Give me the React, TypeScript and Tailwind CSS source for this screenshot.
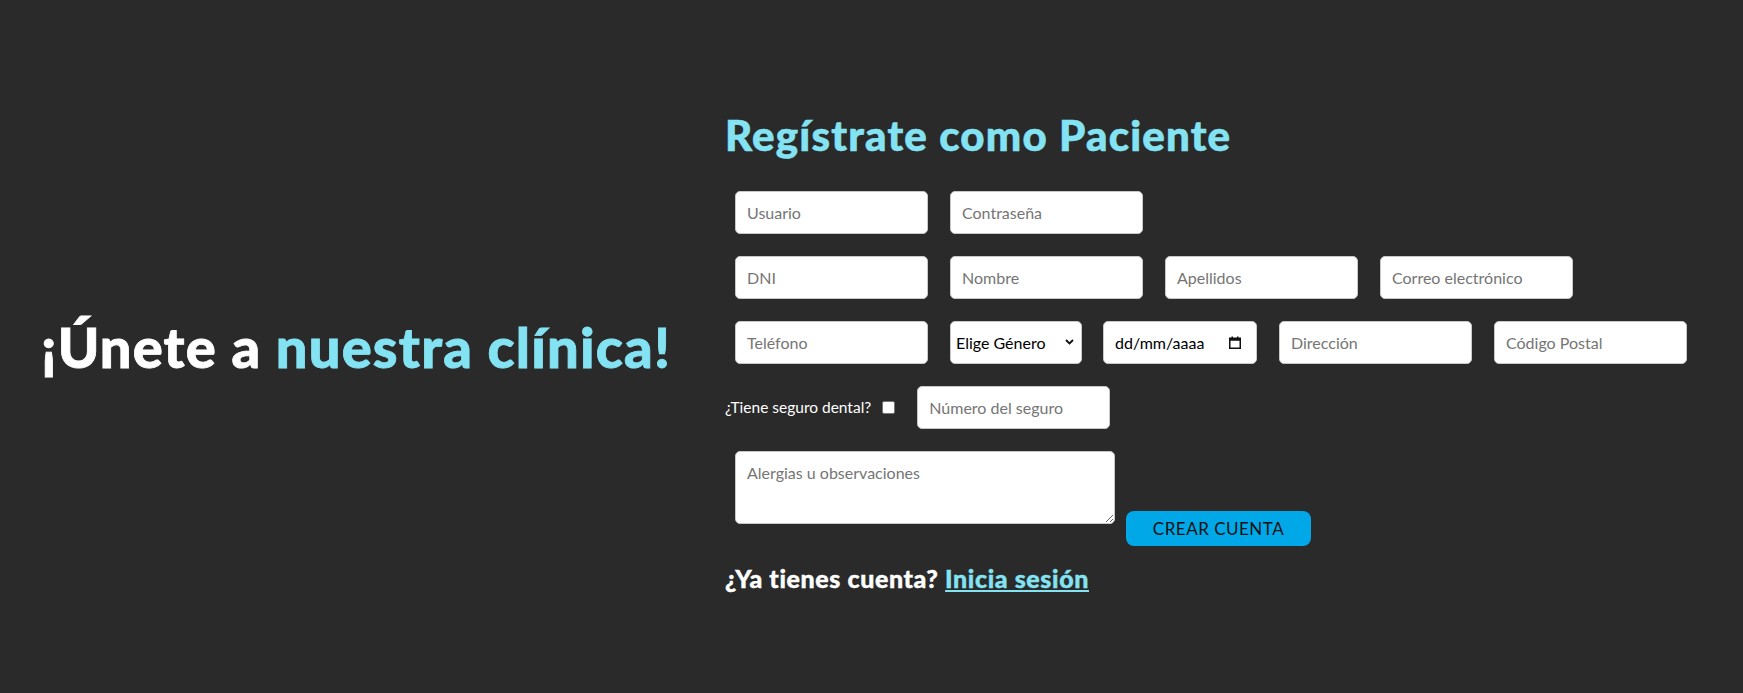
import React from "react";

const inputCls =
  "h-[43px] w-[193px] rounded-[5px] border border-[#c8c8c8] bg-white px-[11px] text-[16px] font-normal text-black placeholder:text-[#757575] outline-none";

function Field({ placeholder, type = "text" }: { placeholder: string; type?: string }) {
  return <input type={type} placeholder={placeholder} className={inputCls} />;
}

export default function App() {
  return (
    <div className="flex h-[693px] w-full overflow-hidden bg-[#2a2a2a] font-['Lato',sans-serif]">
      <div className="flex w-[725px] shrink-0 items-center pl-[41px]">
        <h1 className="whitespace-nowrap text-[56px] font-black leading-[1.2] tracking-[1.2px] text-white [-webkit-text-stroke:0.8px_currentColor]">
          ¡Únete a <span className="text-[#84e3f3]">nuestra clínica!</span>
        </h1>
      </div>
      <div className="flex flex-col pt-[110px]">
        <h2 className="whitespace-nowrap text-[42px] font-black leading-[1.2] tracking-[1.2px] text-[#84e3f3] [-webkit-text-stroke:0.6px_currentColor]">
          Regístrate como Paciente
        </h2>
        <form className="mt-[31px] flex flex-col gap-[22px]" onSubmit={(e) => e.preventDefault()}>
          <div className="flex gap-[22px] pl-[10px]">
            <Field placeholder="Usuario" />
            <Field placeholder="Contraseña" type="password" />
          </div>
          <div className="flex gap-[22px] pl-[10px]">
            <Field placeholder="DNI" />
            <Field placeholder="Nombre" />
            <Field placeholder="Apellidos" />
            <Field placeholder="Correo electrónico" />
          </div>
          <div className="flex gap-[22px] pl-[10px]">
            <Field placeholder="Teléfono" />
            <div className="relative h-[43px] w-[132px] -mr-[1px]">
              <select
                defaultValue=""
                className="h-full w-full appearance-none rounded-[5px] border border-[#c8c8c8] bg-white pl-[5px] pr-[20px] text-[16px] font-normal text-black outline-none"
              >
                <option value="">Elige Género</option>
                <option value="m">Masculino</option>
                <option value="f">Femenino</option>
              </select>
              <svg
                className="pointer-events-none absolute right-[8px] top-[18px]"
                width="9"
                height="6"
                viewBox="0 0 9 6"
              >
                <path d="M1 1l3.5 3.5L8 1" fill="none" stroke="#111" strokeWidth="1.8" />
              </svg>
            </div>
            <div className="flex h-[43px] w-[154px] items-center justify-between rounded-[5px] border border-[#c8c8c8] bg-white pl-[11px] pr-[15px] text-[16px] text-black">
              <span>dd/mm/aaaa</span>
              <svg width="12" height="13" viewBox="0 0 12 13">
                <rect x="0.75" y="2.25" width="10.5" height="10" fill="none" stroke="#111" strokeWidth="1.5" />
                <rect x="0.75" y="2.25" width="10.5" height="2.5" fill="#111" />
                <rect x="2.5" y="0.5" width="1.5" height="2.5" fill="#111" />
                <rect x="8" y="0.5" width="1.5" height="2.5" fill="#111" />
              </svg>
            </div>
            <Field placeholder="Dirección" />
            <Field placeholder="Código Postal" />
          </div>
          <div className="flex items-center">
            <label className="whitespace-nowrap text-[15.5px] text-white">¿Tiene seguro dental?</label>
            <span className="ml-[11px] h-[13px] w-[13px] rounded-[2px] border border-[#767676] bg-white" />
            <div className="ml-[22px]">
              <Field placeholder="Número del seguro" />
            </div>
          </div>
          <div className="flex items-start pl-[10px]">
            <textarea
              placeholder="Alergias u observaciones"
              className="h-[73px] w-[380px] rounded-[5px] border border-[#c8c8c8] bg-white px-[11px] py-[9px] text-[16px] text-black placeholder:text-[#757575] outline-none"
            />
            <button
              type="submit"
              className="ml-[11px] mt-[60px] h-[35px] w-[185px] rounded-[8px] bg-[#00a8e8] text-[17px] tracking-[0.5px] text-[#111]"
            >
              CREAR CUENTA
            </button>
          </div>
        </form>
        <p className="mt-[17px] whitespace-nowrap text-[25px] font-black leading-[1.2] tracking-[0.6px] text-white [-webkit-text-stroke:0.4px_currentColor]">
          ¿Ya tienes cuenta?{" "}
          <a href="#" className="text-[#84e3f3] underline">
            Inicia sesión
          </a>
        </p>
      </div>
    </div>
  );
}
